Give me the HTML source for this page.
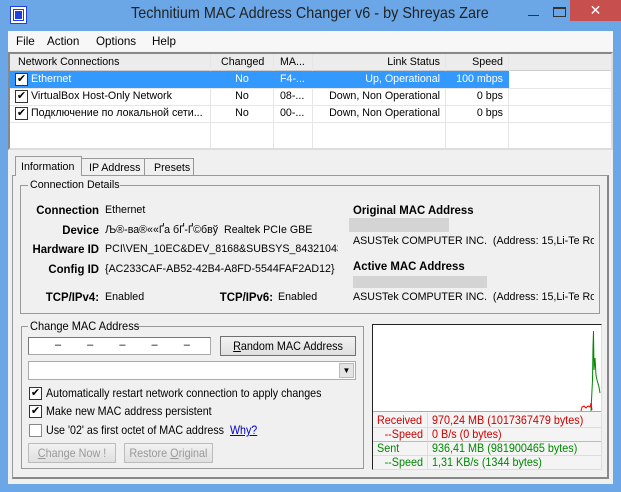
<!DOCTYPE html>
<html><head><style>
*{margin:0;padding:0;box-sizing:border-box}
body{width:621px;height:492px;background:#6ba6e6;font-family:"Liberation Sans","Noto Sans CJK SC",sans-serif;font-size:11px;color:#000;position:relative;overflow:hidden}
.a{position:absolute;white-space:nowrap}
.t{position:absolute;white-space:nowrap;transform:scaleX(.97);transform-origin:0 0}
.r{transform-origin:100% 0;text-align:right}
.c{transform-origin:50% 0;text-align:center}
.b{font-weight:bold;font-size:12px;transform:scaleX(.95)}
.cb{position:absolute;width:13px;height:13px;border:1px solid #333;background:#fff;font-size:11px;line-height:11px;text-align:center}
.btn{position:absolute;border:1px solid #707070;background:linear-gradient(#f2f2f2,#e0e0e0);text-align:center;white-space:nowrap;font-size:12px}
.btn span{display:inline-block;transform:scaleX(.9)}
</style></head><body>
<!-- title -->
<div class="a" style="left:11px;top:7px;width:15px;height:16px;background:#1f3fe0;border:2px solid #fff;outline:1px solid #1f3fe0"></div>
<div class="a" style="left:14px;top:10px;width:9px;height:10px;border:1px solid #fff"></div>
<div class="t" style="left:131px;top:5px;font-size:16px;color:#222;transform:scaleX(.9)">Technitium MAC Address Changer v6 - by Shreyas Zare</div>
<div class="a" style="left:528px;top:15px;width:11px;height:1px;background:#333"></div>
<div class="a" style="left:553px;top:7px;width:13px;height:10px;border:1px solid #333;border-top-width:2px"></div>
<div class="a" style="left:570px;top:0;width:51px;height:21px;background:#c7504e;color:#fff;text-align:center;font-size:14px;line-height:21px">✕</div>
<!-- client -->
<div class="a" style="left:8px;top:31px;width:605px;height:453px;background:#f0f0f0"></div>
<div class="a" style="left:8px;top:31px;width:605px;height:20px;background:#f7f7f7"></div>
<div class="t" style="left:16px;top:34px;font-size:12px">File</div>
<div class="t" style="left:47px;top:34px;font-size:12px">Action</div>
<div class="t" style="left:96px;top:34px;font-size:12px">Options</div>
<div class="t" style="left:152px;top:34px;font-size:12px">Help</div>
<!-- listview -->
<div class="a" style="left:8px;top:52px;width:605px;height:98px;border:2px solid #888;border-right-color:#ddd;border-bottom-color:#ddd;background:#fff"></div>
<div class="a" style="left:10px;top:54px;width:601px;height:17px;background:#ececec;border-bottom:1px solid #ccc"></div>
<div class="a" style="left:210px;top:54px;width:1px;height:94px;background:#e6e6e6"></div>
<div class="a" style="left:273px;top:54px;width:1px;height:94px;background:#e6e6e6"></div>
<div class="a" style="left:312px;top:54px;width:1px;height:94px;background:#e6e6e6"></div>
<div class="a" style="left:445px;top:54px;width:1px;height:94px;background:#e6e6e6"></div>
<div class="a" style="left:508px;top:54px;width:1px;height:94px;background:#e6e6e6"></div>
<div class="t" style="left:18px;top:56px">Network Connections</div>
<div class="t" style="left:221px;top:56px">Changed</div>
<div class="t" style="left:280px;top:56px">MA...</div>
<div class="t r" style="left:313px;top:56px;width:127px">Link Status</div>
<div class="t r" style="left:446px;top:56px;width:57px">Speed</div>
<div class="a" style="left:10px;top:71px;width:499px;height:17px;background:#3399ff"></div>
<div class="a" style="left:10px;top:88px;width:601px;height:1px;background:#e6e6e6"></div>
<div class="a" style="left:10px;top:105px;width:601px;height:1px;background:#e6e6e6"></div>
<div class="a" style="left:10px;top:122px;width:601px;height:1px;background:#e6e6e6"></div>
<div class="cb" style="left:15px;top:73px">✔</div>
<div class="cb" style="left:15px;top:90px">✔</div>
<div class="cb" style="left:15px;top:107px">✔</div>
<div class="t" style="left:31px;top:73px;color:#fff">Ethernet</div>
<div class="t c" style="left:211px;top:73px;width:62px;color:#fff">No</div>
<div class="t" style="left:280px;top:73px;color:#fff">F4-...</div>
<div class="t r" style="left:313px;top:73px;width:127px;color:#fff">Up, Operational</div>
<div class="t r" style="left:446px;top:73px;width:57px;color:#fff">100 mbps</div>
<div class="t" style="left:31px;top:90px">VirtualBox Host-Only Network</div>
<div class="t c" style="left:211px;top:90px;width:62px">No</div>
<div class="t" style="left:280px;top:90px">08-...</div>
<div class="t r" style="left:313px;top:90px;width:127px">Down, Non Operational</div>
<div class="t r" style="left:446px;top:90px;width:57px">0 bps</div>
<div class="t" style="left:31px;top:107px">Подключение по локальной сети...</div>
<div class="t c" style="left:211px;top:107px;width:62px">No</div>
<div class="t" style="left:280px;top:107px">00-...</div>
<div class="t r" style="left:313px;top:107px;width:127px">Down, Non Operational</div>
<div class="t r" style="left:446px;top:107px;width:57px">0 bps</div>
<!-- tabs -->
<div class="a" style="left:12px;top:175px;width:597px;height:304px;border:1px solid #999;border-right:2px solid #888;border-bottom:2px solid #888;background:#f0f0f0"></div>
<div class="a" style="left:15px;top:156px;width:67px;height:20px;border:1px solid #999;border-bottom:none;background:#f0f0f0"></div>
<div class="a" style="left:82px;top:158px;width:63px;height:17px;border:1px solid #999;border-left:none;border-bottom:none"></div>
<div class="a" style="left:145px;top:158px;width:49px;height:17px;border:1px solid #999;border-left:none;border-bottom:none"></div>
<div class="t" style="left:21px;top:161px">Information</div>
<div class="t" style="left:89px;top:162px">IP Address</div>
<div class="t" style="left:154px;top:162px">Presets</div>
<!-- connection details -->
<div class="a" style="left:20px;top:185px;width:580px;height:129px;border:1px solid #999"></div>
<div class="a" style="left:28px;top:179px;width:92px;height:12px;background:#f0f0f0"></div>
<div class="t" style="left:30px;top:179px">Connection Details</div>
<div class="t b r" style="left:9px;top:203px;width:90px">Connection</div>
<div class="t" style="left:105px;top:204px">Ethernet</div>
<div class="t b r" style="left:9px;top:223px;width:90px">Device</div>
<div class="t" style="left:105px;top:224px">Љ®-ва®««Ґа бҐ-Ґ©бвў&nbsp; Realtek PCIe GBE</div>
<div class="t b r" style="left:9px;top:242px;width:90px">Hardware ID</div>
<div class="a" style="left:105px;top:243px;width:233px;overflow:hidden"><span class="t" style="position:static;display:inline-block">PCI\VEN_10EC&amp;DEV_8168&amp;SUBSYS_84321043</span></div>
<div class="t b r" style="left:9px;top:262px;width:90px">Config ID</div>
<div class="t" style="left:105px;top:263px">{AC233CAF-AB52-42B4-A8FD-5544FAF2AD12}</div>
<div class="t b r" style="left:9px;top:290px;width:90px">TCP/IPv4:</div>
<div class="t" style="left:105px;top:291px">Enabled</div>
<div class="t b r" style="left:180px;top:290px;width:93px">TCP/IPv6:</div>
<div class="t" style="left:278px;top:291px">Enabled</div>
<div class="t b" style="left:353px;top:203px">Original MAC Address</div>
<div class="a" style="left:349px;top:218px;width:100px;height:14px;background:#d4d4d4"></div>
<div class="a" style="left:353px;top:235px;width:241px;overflow:hidden"><span class="t" style="position:static;display:inline-block">ASUSTek COMPUTER INC.&nbsp; (Address: 15,Li-Te Road, Peitou, Taipei)</span></div>
<div class="t b" style="left:353px;top:259px">Active MAC Address</div>
<div class="a" style="left:353px;top:276px;width:134px;height:12px;background:#d4d4d4"></div>
<div class="a" style="left:353px;top:291px;width:241px;overflow:hidden"><span class="t" style="position:static;display:inline-block">ASUSTek COMPUTER INC.&nbsp; (Address: 15,Li-Te Road, Peitou, Taipei)</span></div>
<!-- change mac -->
<div class="a" style="left:21px;top:326px;width:343px;height:143px;border:1px solid #999"></div>
<div class="a" style="left:28px;top:319px;width:106px;height:12px;background:#f0f0f0"></div>
<div class="t" style="left:30px;top:319px;font-size:12px;transform:scaleX(.92)">Change MAC Address</div>
<div class="a" style="left:28px;top:337px;width:183px;height:18px;border:1px solid #aaa;border-top-color:#777;border-left-color:#777;background:#fff"></div>
<div class="a" style="left:55px;top:339px;word-spacing:23px">– – – – –</div>
<div class="btn" style="left:220px;top:336px;width:136px;height:20px;line-height:18px"><span><u>R</u>andom MAC Address</span></div>
<div class="a" style="left:28px;top:361px;width:328px;height:19px;border:1px solid #aaa;background:#fff"></div>
<div class="a" style="left:339px;top:363px;width:15px;height:15px;background:#e4e4e4;border:1px solid #bbb;font-size:8px;text-align:center;line-height:14px">▼</div>
<div class="cb" style="left:29px;top:387px">✔</div>
<div class="t" style="left:46px;top:386px;font-size:12px;transform:scaleX(.89)">Automatically restart network connection to apply changes</div>
<div class="cb" style="left:29px;top:405px">✔</div>
<div class="t" style="left:46px;top:404px;font-size:12px;transform:scaleX(.89)">Make new MAC address persistent</div>
<div class="cb" style="left:29px;top:424px;border-color:#888"></div>
<div class="t" style="left:46px;top:423px;font-size:12px;transform:scaleX(.89)">Use '02' as first octet of MAC address&nbsp; <span style="color:#00c;text-decoration:underline">Why?</span></div>
<div class="btn" style="left:28px;top:443px;width:88px;height:20px;line-height:18px;color:#999;border-color:#bbb"><span><u>C</u>hange Now !</span></div>
<div class="btn" style="left:124px;top:443px;width:89px;height:20px;line-height:18px;color:#999;border-color:#bbb"><span>Restore <u>O</u>riginal</span></div>
<!-- graph -->
<div class="a" style="left:372px;top:324px;width:230px;height:146px;border:1px solid #222;border-right-color:#ddd;border-bottom-color:#ddd;background:#f4f4f4"></div>
<div class="a" style="left:373px;top:325px;width:228px;height:87px;background:#fff;border-bottom:1px solid #aaa"></div>
<svg class="a" style="left:373px;top:325px" width="228" height="87"><polyline points="218,86 219.5,55 220,22 220.5,6 221,45 222,33 223,50 224,55 226,62 227,68" fill="none" stroke="#080" stroke-width="1"/><polyline points="208,86 209,82 211,81 213,83 215,81 217,82 218,78 219,85" fill="none" stroke="red" stroke-width="1"/></svg>
<div class="a" style="left:373px;top:427px;width:228px;height:1px;background:#ddd"></div>
<div class="a" style="left:373px;top:441px;width:228px;height:1px;background:#bbb"></div>
<div class="a" style="left:373px;top:455px;width:228px;height:1px;background:#ddd"></div>
<div class="a" style="left:427px;top:413px;width:1px;height:56px;background:#ddd"></div>
<div class="t" style="left:377px;top:413px;color:#c00;font-size:12px;transform:scaleX(.9)">Received</div>
<div class="t" style="left:432px;top:413px;color:#c00;font-size:12px;transform:scaleX(.9)">970,24 MB (1017367479 bytes)</div>
<div class="t r" style="left:363px;top:427px;width:60px;color:#c00;font-size:12px;transform:scaleX(.9)">--Speed</div>
<div class="t" style="left:432px;top:427px;color:#c00;font-size:12px;transform:scaleX(.9)">0 B/s (0 bytes)</div>
<div class="t" style="left:377px;top:441px;color:#080;font-size:12px;transform:scaleX(.9)">Sent</div>
<div class="t" style="left:432px;top:441px;color:#080;font-size:12px;transform:scaleX(.9)">936,41 MB (981900465 bytes)</div>
<div class="t r" style="left:363px;top:455px;width:60px;color:#080;font-size:12px;transform:scaleX(.9)">--Speed</div>
<div class="t" style="left:432px;top:455px;color:#080;font-size:12px;transform:scaleX(.9)">1,31 KB/s (1344 bytes)</div>
</body></html>
